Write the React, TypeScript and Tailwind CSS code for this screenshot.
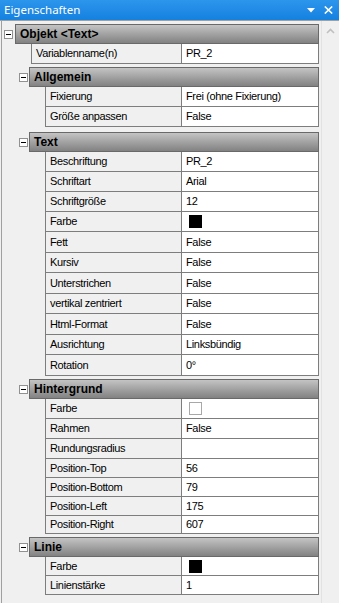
import React from "react";

type Row = { label: string; value?: string; swatch?: "black" | "white"; h: number };
type Sec = { title: string; gap: number; rows: Row[] };

const H: Record<number, string> = {
  18: "h-[18px]",
  19: "h-[19px]",
  20: "h-[20px]",
  21: "h-[21px]",
};
const G: Record<number, string> = {
  3: "pt-[3px]",
  4: "pt-[4px]",
  5: "pt-[5px]",
};

const subs: Sec[] = [
  {
    title: "Allgemein",
    gap: 3,
    rows: [
      { label: "Fixierung", value: "Frei (ohne Fixierung)", h: 20 },
      { label: "Größe anpassen", value: "False", h: 20 },
    ],
  },
  {
    title: "Text",
    gap: 5,
    rows: [
      { label: "Beschriftung", value: "PR_2", h: 20 },
      { label: "Schriftart", value: "Arial", h: 20 },
      { label: "Schriftgröße", value: "12", h: 20 },
      { label: "Farbe", swatch: "black", h: 20 },
      { label: "Fett", value: "False", h: 21 },
      { label: "Kursiv", value: "False", h: 20 },
      { label: "Unterstrichen", value: "False", h: 21 },
      { label: "vertikal zentriert", value: "False", h: 20 },
      { label: "Html-Format", value: "False", h: 21 },
      { label: "Ausrichtung", value: "Linksbündig", h: 20 },
      { label: "Rotation", value: "0°", h: 21 },
    ],
  },
  {
    title: "Hintergrund",
    gap: 3,
    rows: [
      { label: "Farbe", swatch: "white", h: 20 },
      { label: "Rahmen", value: "False", h: 20 },
      { label: "Rundungsradius", value: "", h: 20 },
      { label: "Position-Top", value: "56", h: 19 },
      { label: "Position-Bottom", value: "79", h: 19 },
      { label: "Position-Left", value: "175", h: 19 },
      { label: "Position-Right", value: "607", h: 18 },
    ],
  },
  {
    title: "Linie",
    gap: 3,
    rows: [
      { label: "Farbe", swatch: "black", h: 19 },
      { label: "Linienstärke", value: "1", h: 19 },
    ],
  },
];

function Minus() {
  return (
    <div className="w-[9px] h-[9px] border border-[#919191] bg-white flex items-center justify-center">
      <div className="w-[5px] h-[1px] bg-black" />
    </div>
  );
}

function Header({ title, level }: { title: string; level: number }) {
  return (
    <div className="flex h-[20px]">
      <div
        className={
          level === 0
            ? "w-[13px] shrink-0 pl-[2px] flex items-center"
            : "w-[27px] shrink-0 pl-[17px] flex items-center"
        }
      >
        <Minus />
      </div>
      <div className="flex-1 flex items-center border border-[#696969] bg-linear-to-b from-[#c4c4c4] to-[#828282] pl-[4px] text-[12px] font-bold leading-[14px] text-black">
        {title}
      </div>
    </div>
  );
}

function PropRow({ row, level }: { row: Row; level: number }) {
  return (
    <div className={"flex text-[11px] leading-[13px] tracking-[-0.35px] text-black " + H[row.h]}>
      <div className={level === 0 ? "w-[29px] shrink-0" : "w-[43px] shrink-0"} />
      <div
        className={
          (level === 0 ? "w-[150px]" : "w-[136px]") +
          " shrink-0 flex items-center border-l border-b border-[#7d7d7d] bg-[#f0f0f0] pl-[4px] whitespace-nowrap overflow-hidden"
        }
      >
        {row.label}
      </div>
      <div className="flex-1 flex items-center border-l border-r border-b border-[#7d7d7d] bg-white pl-[4px] whitespace-nowrap overflow-hidden">
        {row.swatch === "black" && <div className="ml-[3px] w-[13px] h-[13px] bg-black" />}
        {row.swatch === "white" && (
          <div className="ml-[3px] w-[13px] h-[13px] bg-white border border-[#a8a8a8]" />
        )}
        {row.value !== undefined && <span>{row.value}</span>}
      </div>
    </div>
  );
}

export default function App() {
  return (
    <div className="w-[339px] h-[603px] overflow-hidden bg-[#f0f0f0] font-['Liberation_Sans',Arial,sans-serif]">
      <div className="h-[20px] flex items-center bg-linear-to-b from-[#2c95ec] to-[#1481e0] pl-[4px] pr-[6px]">
        <span className="font-['Noto_Sans',sans-serif] text-[11.5px] leading-[20px] text-white">
          Eigenschaften
        </span>
        <svg className="ml-auto" width="8" height="5" viewBox="0 0 8 5">
          <polygon points="0,0 8,0 4,4.5" fill="#ffffff" />
        </svg>
        <svg className="ml-[9px]" width="9" height="8" viewBox="0 0 9 8">
          <path d="M0.8 0.5 L8.2 7.5 M8.2 0.5 L0.8 7.5" stroke="#ffffff" strokeWidth="1.6" />
        </svg>
      </div>
      <div className="flex h-[583px] border-t border-[#a0a0a0]">
        <div className="ml-[1px] w-[320px] border-l border-[#a0a0a0] pr-[2px] pt-[3px] flex flex-col">
          <Header title="Objekt <Text>" level={0} />
          <PropRow row={{ label: "Variablenname(n)", value: "PR_2", h: 20 }} level={0} />
          {subs.map((s) => (
            <div key={s.title} className={G[s.gap]}>
              <Header title={s.title} level={1} />
              {s.rows.map((r, i) => (
                <PropRow key={i} row={r} level={1} />
              ))}
            </div>
          ))}
        </div>
        <div className="w-[18px] border-l border-[#e2e2e2] flex justify-center pt-[7px]">
          <svg width="9" height="6" viewBox="0 0 9 6">
            <path d="M1 5 L4.5 1.5 L8 5" stroke="#c0c0c0" strokeWidth="1.6" fill="none" />
          </svg>
        </div>
      </div>
    </div>
  );
}
